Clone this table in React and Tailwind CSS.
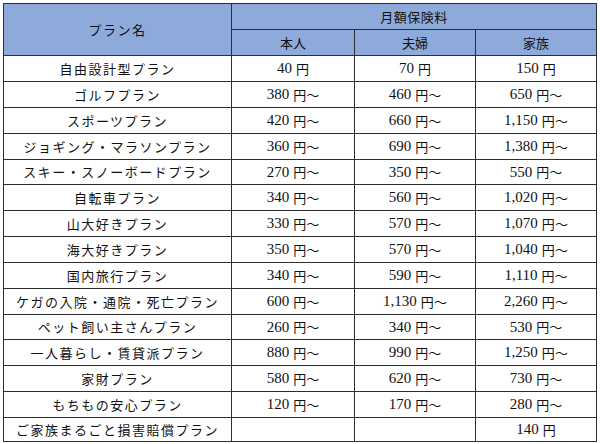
const rows = [
  { name: "自由設計型プラン", a: "40", b: "70", c: "150", t: ["", "", ""], h: "h-[26px]" },
  { name: "ゴルフプラン", a: "380", b: "460", c: "650", h: "h-[26px]" },
  { name: "スポーツプラン", a: "420", b: "660", c: "1,150", h: "h-[26px]" },
  { name: "ジョギング・マラソンプラン", a: "360", b: "690", c: "1,380", h: "h-[26px]" },
  { name: "スキー・スノーボードプラン", a: "270", b: "350", c: "550", h: "h-[25px]" },
  { name: "自転車プラン", a: "340", b: "560", c: "1,020", h: "h-[26px]" },
  { name: "山大好きプラン", a: "330", b: "570", c: "1,070", h: "h-[26px]" },
  { name: "海大好きプラン", a: "350", b: "570", c: "1,040", h: "h-[26px]" },
  { name: "国内旅行プラン", a: "340", b: "590", c: "1,110", h: "h-[26px]" },
  { name: "ケガの入院・通院・死亡プラン", a: "600", b: "1,130", c: "2,260", h: "h-[26px]" },
  { name: "ペット飼い主さんプラン", a: "260", b: "340", c: "530", h: "h-[25px]" },
  { name: "一人暮らし・賃貸派プラン", a: "880", b: "990", c: "1,250", h: "h-[26px]" },
  { name: "家財プラン", a: "580", b: "620", c: "730", h: "h-[26px]" },
  { name: "もちもの安心プラン", a: "120", b: "170", c: "280", h: "h-[26px]" },
  { name: "ご家族まるごと損害賠償プラン", a: "", b: "", c: "140", h: "h-[24px]" },
];

const jp = "font-['Noto_Sans_CJK_JP',sans-serif]";
const num = "font-['Liberation_Serif','Noto_Sans_CJK_JP',serif]";
const cell = "flex items-center justify-center border-r border-b border-[#2e2e2e] text-[#111]";

// "from" rows end with a wave dash; the first and last rows are fixed prices
const Price = ({ value, from }) =>
  value ? (
    <span className="flex items-center">
      <span className={`text-[15px] ${num}`}>{value}</span>
      <span className={`ml-[4px] text-[13px] ${jp}`}>円</span>
      {from && <span className={`text-[13px] ${jp}`}>〜</span>}
    </span>
  ) : null;

export default function App() {
  return (
    <div className="w-[600px] h-[444px] bg-white pl-[3px] pt-[3px]">
      <div className="grid grid-cols-[228px_123px_121px_121px] border-l border-t border-[#2e2e2e] w-[594px]">
        {/* header */}
        <div className={`${cell} row-span-2 bg-[#8eaadb] text-[13px] tracking-[1.5px] ${jp}`}>
          プラン名
        </div>
        <div className={`${cell} col-span-3 h-[26px] bg-[#8eaadb] text-[13px] tracking-[0.5px] ${jp}`}>
          月額保険料
        </div>
        <div className={`${cell} h-[26px] bg-[#8eaadb] text-[13px] ${jp}`}>本人</div>
        <div className={`${cell} h-[26px] bg-[#8eaadb] text-[13px] ${jp}`}>夫婦</div>
        <div className={`${cell} h-[26px] bg-[#8eaadb] text-[13px] ${jp}`}>家族</div>

        {rows.map((r, i) => {
          const from = i !== 0 && i !== rows.length - 1;
          return (
            <div key={r.name} className="contents">
              <div className={`${cell} ${r.h} text-[13px] tracking-[1.5px] ${jp}`}>{r.name}</div>
              <div className={`${cell} ${r.h}`}>
                <Price value={r.a} from={from} />
              </div>
              <div className={`${cell} ${r.h}`}>
                <Price value={r.b} from={from} />
              </div>
              <div className={`${cell} ${r.h}`}>
                <Price value={r.c} from={from} />
              </div>
            </div>
          );
        })}
      </div>
    </div>
  );
}
